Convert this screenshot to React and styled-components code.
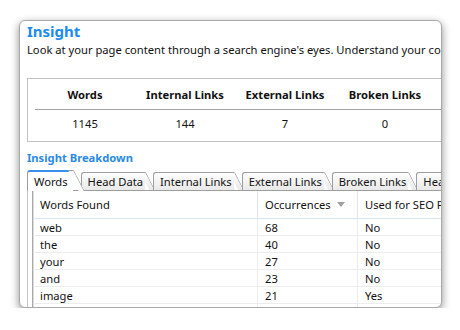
import React from 'react'
import styled, { createGlobalStyle } from 'styled-components'

const GlobalStyle = createGlobalStyle`
    body{
        margin : 0;
        background : #ffffff;
        font-family : "Noto Sans", "Open Sans", sans-serif;
        color : #111;
    }
`

const stats = [
    { label: 'Words', value: 1145 },
    { label: 'Internal Links', value: 144 },
    { label: 'External Links', value: 7 },
    { label: 'Broken Links', value: 0 },
]

const tabs = ['Words', 'Head Data', 'Internal Links', 'External Links', 'Broken Links', 'Head Structure']

const rows = [
    ['web', 68, 'No'],
    ['the', 40, 'No'],
    ['your', 27, 'No'],
    ['and', 23, 'No'],
    ['image', 21, 'Yes'],
    ['page', 19, 'No'],
]

function App() {
    return (
        <>
            <GlobalStyle />
            <Window>
                <Content>
                    <Title>Insight</Title>
                    <Description>
                        Look at your page content through a search engine's eyes. Understand your content and what it says.
                    </Description>

                    <StatsBox>
                        <StatsGrid>
                            {stats.map(s => <StatHead key={s.label}>{s.label}</StatHead>)}
                            <StatHead />
                            {stats.map(s => <StatValue key={s.label}>{s.value}</StatValue>)}
                            <StatValue />
                        </StatsGrid>
                    </StatsBox>

                    <SubTitle>Insight Breakdown</SubTitle>

                    <TabRow>
                        {tabs.map((t, i) => (
                            <Tab key={t} $active={i === 0}>{t}</Tab>
                        ))}
                    </TabRow>
                    <Panel>
                        <Table>
                            <HeadRow>
                                <HeadCell $w={225}>Words Found</HeadCell>
                                <HeadCell $w={100}>Occurrences <SortArrow /></HeadCell>
                                <HeadCell $w={200}>Used for SEO Purposes</HeadCell>
                            </HeadRow>
                            {rows.map(r => (
                                <Row key={r[0]}>
                                    <Cell $w={225}>{r[0]}</Cell>
                                    <Cell $w={100}>{r[1]}</Cell>
                                    <Cell $w={200}>{r[2]}</Cell>
                                </Row>
                            ))}
                        </Table>
                    </Panel>
                </Content>
            </Window>
        </>
    )
}

const FS = '11.2px'

const Window = styled.div`
    margin : 20px 0 0 19px;
    width : 421px;
    height : 286px;
    border : 1px solid #a9a9a9;
    border-radius : 6px;
    overflow : hidden;
    background : #fff;
    box-shadow : 0 3px 9px rgba(0,0,0,0.45);
`

const Content = styled.div`
    width : 640px;
    padding-left : 7px;
`

const Title = styled.div`
    font-size : 15px;
    font-weight : 700;
    line-height : 20px;
    color : #1b8cf2;
`

const Description = styled.div`
    margin-top : 1px;
    font-size : ${FS};
    line-height : 16px;
    white-space : nowrap;
`

const StatsBox = styled.div`
    margin-top : 20px;
    width : 560px;
    border : 1px solid #c2c2c2;
    padding : 0 0 5px 7px;
`

const StatsGrid = styled.div`
    display : grid;
    grid-template-columns : repeat(4, 100px) 1fr;
`

const StatHead = styled.div`
    height : 30px;
    display : flex;
    align-items : center;
    justify-content : center;
    font-size : ${FS};
    font-weight : 700;
    border-bottom : 1px solid #a3a3a3;
`

const StatValue = styled.div`
    height : 26px;
    display : flex;
    align-items : center;
    justify-content : center;
    font-size : ${FS};
`

const SubTitle = styled.div`
    margin-top : 8px;
    font-size : ${FS};
    font-weight : 700;
    line-height : 15px;
    color : #2a8ae6;
`

const TabRow = styled.div`
    margin-top : 6px;
    display : flex;
    align-items : flex-end;
    height : 19px;
`

const Tab = styled.div`
    position : relative;
    height : ${p => p.$active ? '19px' : '17px'};
    margin-bottom : ${p => p.$active ? '-1px' : '0'};
    margin-right : 8px;
    padding : ${p => p.$active ? '0 5px 0 6px' : '0 2px 0 6px'};
    display : flex;
    align-items : center;
    font-size : ${FS};
    line-height : 16px;
    white-space : nowrap;
    z-index : ${p => p.$active ? 2 : 1};
    background : ${p => p.$active ? '#fff' : 'linear-gradient(#fefefe, #e9e9e9)'};
    border-left : 1px solid #9e9e9e;
    border-top : ${p => p.$active ? '2px solid #3a8fe8' : '1px solid #9e9e9e'};
    border-top-left-radius : 3px;

    &::after{
        content : '';
        position : absolute;
        top : ${p => p.$active ? '-2px' : '-1px'};
        bottom : 0;
        left : calc(100% - 5px);
        width : 5px;
        background : ${p => p.$active ? '#fff' : 'linear-gradient(#fefefe, #e9e9e9)'};
        border-top : 1px solid #9e9e9e;
        border-right : 1px solid #9e9e9e;
        border-top-right-radius : 2px;
        transform : skewX(27deg);
        transform-origin : top left;
        z-index : -1;
    }
`

const Panel = styled.div`
    border-top : 1px solid #9e9e9e;
    border-left : 1px solid #c6c6c6;
    padding-left : 4px;
    height : 140px;
`

const Table = styled.div`
    border-left : 1px solid #a9a9a9;
    box-shadow : inset 1px 0 0 #dcdcdc;
`

const HeadRow = styled.div`
    display : flex;
    height : 27px;
    border-bottom : 1px solid #dde7f2;
`

const HeadCell = styled.div`
    width : ${p => p.$w}px;
    flex : none;
    display : flex;
    align-items : center;
    padding-left : 7px;
    box-sizing : border-box;
    font-size : ${FS};
    border-right : 1px solid #e4e4e4;
`

const SortArrow = styled.span`
    margin-left : 6px;
    width : 0;
    height : 0;
    border-left : 4px solid transparent;
    border-right : 4px solid transparent;
    border-top : 5px solid #a0a0a0;
`

const Row = styled.div`
    display : flex;
    height : 16px;
    border-bottom : 1px solid #ededed;
`

const Cell = styled.div`
    width : ${p => p.$w}px;
    flex : none;
    display : flex;
    align-items : center;
    padding-left : 7px;
    box-sizing : border-box;
    font-size : ${FS};
    border-right : 1px solid #ececec;
`

export default App
